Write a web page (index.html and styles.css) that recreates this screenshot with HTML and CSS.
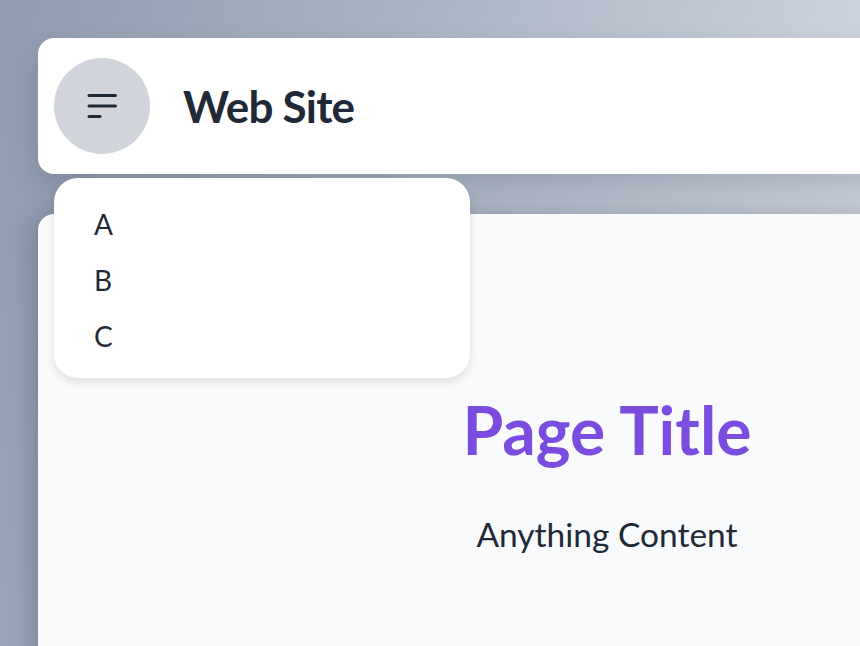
FILE: index.html
```html
<!DOCTYPE html>
<html lang="en">
<head>
<meta charset="utf-8">
<title>Web Site</title>
<link rel="stylesheet" href="styles.css">
</head>
<body>
<div class="page">
  <header class="topbar">
    <button class="menu-btn" aria-label="Menu">
      <svg width="34" height="26" viewBox="0 0 34 26" fill="none" stroke="#1f2937" stroke-width="3" stroke-linecap="round">
        <path d="M4 2.5H30.5"/>
        <path d="M4 13H30.5"/>
        <path d="M4 23.5H15"/>
      </svg>
    </button>
    <h1 class="site-name">Web Site</h1>
  </header>
  <ul class="dropdown">
    <li>A</li>
    <li>B</li>
    <li>C</li>
  </ul>
  <main class="content">
    <h2 class="page-title">Page Title</h2>
    <p class="page-text">Anything Content</p>
  </main>
</div>
</body>
</html>
```
FILE: styles.css
```css
html, body {
  margin: 0;
  padding: 0;
  height: 100%;
  overflow: hidden;
}
body {
  background: linear-gradient(105deg, #8f9bae 0%, #a9b3c3 40%, #d8dde6 100%);
  font-family: "Lato", "Noto Sans", sans-serif;
  color: #1f2937;
}
.page {
  position: relative;
  padding: 38px 0 0 38px;
  width: 1200px;
  display: flex;
  flex-direction: column;
  gap: 40px;
}
.topbar {
  display: flex;
  align-items: center;
  gap: 33px;
  height: 136px;
  box-sizing: border-box;
  padding: 20px 16px;
  background: #ffffff;
  border-radius: 16px 0 0 16px;
  box-shadow: 0 16px 30px rgba(30, 41, 59, 0.18);
}
.menu-btn {
  width: 96px;
  height: 96px;
  border: none;
  border-radius: 50%;
  background: #d1d5db;
  display: flex;
  align-items: center;
  justify-content: center;
  padding: 0;
  flex: none;
}
.site-name {
  margin: 0;
  font-size: 44px;
  font-weight: 700;
  letter-spacing: -0.8px;
  color: #1f2937;
}
.dropdown {
  position: absolute;
  top: 178px;
  left: 54px;
  width: 416px;
  box-sizing: border-box;
  margin: 0;
  padding: 18px 40px 14px;
  list-style: none;
  background: #ffffff;
  border-radius: 24px;
  box-shadow: 0 4px 10px rgba(15, 23, 42, 0.12);
  z-index: 2;
}
.dropdown li {
  height: 56px;
  line-height: 56px;
  font-size: 28px;
  color: #1f2937;
}
.content {
  width: 1138px;
  height: 600px;
  box-sizing: border-box;
  background: #f9fafb;
  border-radius: 16px 0 0 0;
  box-shadow: -6px 0 24px rgba(30, 41, 59, 0.25);
  text-align: center;
  padding-top: 176px;
}
.page-title {
  margin: 0;
  font-size: 66px;
  font-weight: 700;
  line-height: 80px;
  color: #7a4ce0;
}
.page-text {
  margin: 44px 0 0;
  font-size: 33.5px;
  line-height: 40px;
  color: #1f2937;
}
```
